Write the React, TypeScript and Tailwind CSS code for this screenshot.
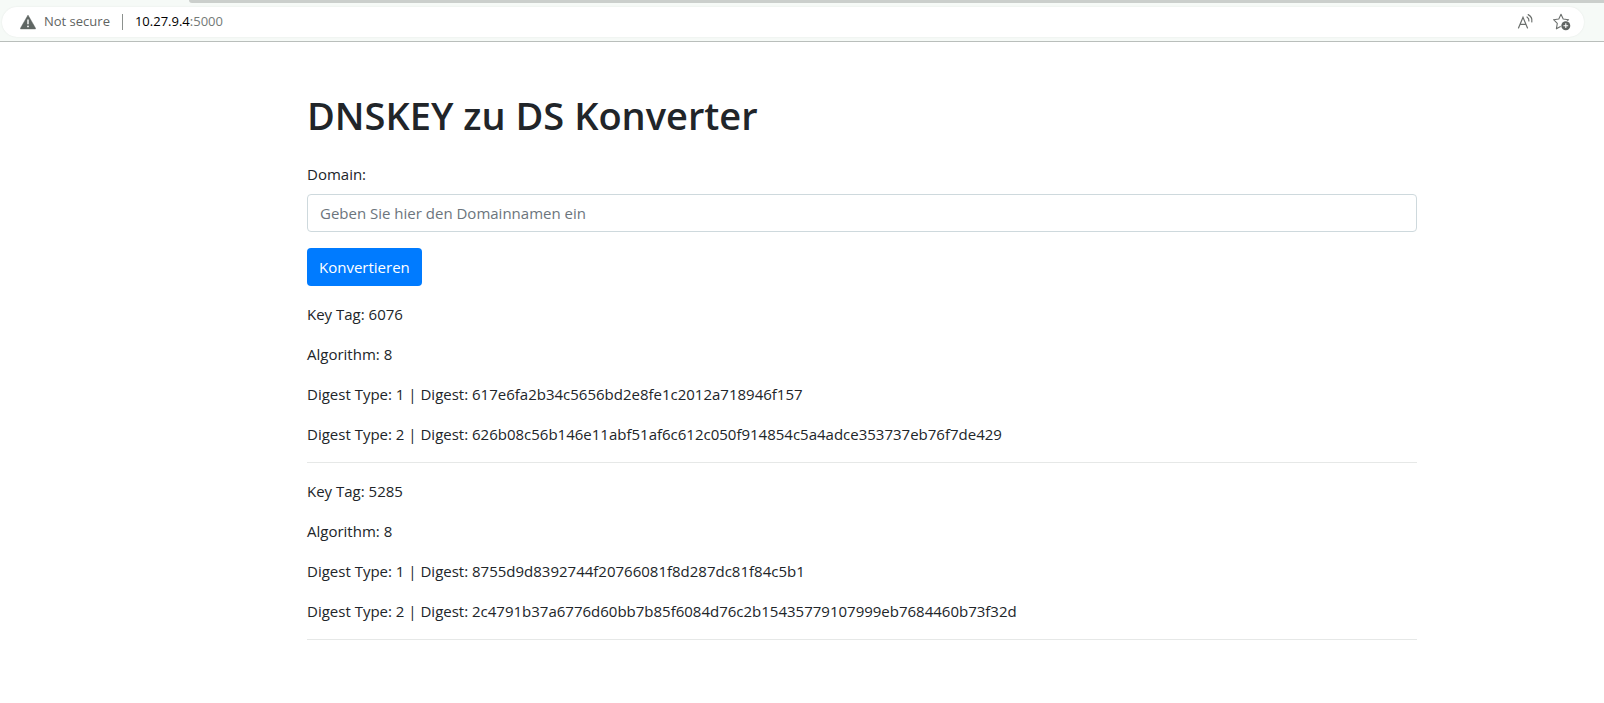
import React from "react";

type Digest = { type: number; value: string };
type KeyRecord = { keyTag: number; algorithm: number; digests: Digest[] };

const records: KeyRecord[] = [
  {
    keyTag: 6076,
    algorithm: 8,
    digests: [
      { type: 1, value: "617e6fa2b34c5656bd2e8fe1c2012a718946f157" },
      { type: 2, value: "626b08c56b146e11abf51af6c612c050f914854c5a4adce353737eb76f7de429" },
    ],
  },
  {
    keyTag: 5285,
    algorithm: 8,
    digests: [
      { type: 1, value: "8755d9d8392744f20766081f8d287dc81f84c5b1" },
      { type: 2, value: "2c4791b37a6776d60bb7b85f6084d76c2b15435779107999eb7684460b73f32d" },
    ],
  },
];

function WarningIcon() {
  return (
    <svg width="16" height="16" viewBox="0 0 16 16" aria-hidden="true">
      <path d="M8 1 15.6 14.2 Q16 15 15.2 15 H0.8 Q0 15 0.4 14.2Z" fill="#5f6663" stroke="#5f6663" strokeWidth="0.4" strokeLinejoin="round" />
      <path d="M8 5.5v4.8" stroke="#fff" strokeWidth="1.4" />
      <circle cx="8" cy="12.4" r="0.9" fill="#fff" />
    </svg>
  );
}

function ReadAloudIcon() {
  return (
    <svg width="18" height="18" viewBox="0 0 18 18" fill="none" stroke="#6b6f6d" strokeWidth="1.2" strokeLinecap="round" aria-hidden="true">
      <path d="M1.5 15 6 4.3 10.5 15M3.1 11.4H8.9" />
      <path d="M10 4Q12.2 5.5 11.9 8M11.2 1.6Q15.6 4 14.8 8.8" />
    </svg>
  );
}

function AddFavoriteIcon() {
  return (
    <svg width="18" height="18" viewBox="0 0 18 18" fill="none" aria-hidden="true">
      <path
        d="M8 1.2 10.2 6 15.6 6.7 11.6 10.4 12.6 15.8 8 13.2 3.4 15.8 4.3 10.4 0.6 6.7 5.8 6Z"
        stroke="#6b6f6d"
        strokeWidth="1.1"
        strokeLinejoin="round"
      />
      <circle cx="12.8" cy="12.7" r="5.2" fill="#fff" />
      <circle cx="12.8" cy="12.7" r="4.5" fill="#5f6361" />
      <path d="M12.8 10.3v4.8M10.4 12.7h4.8" stroke="#fff" strokeWidth="1.1" />
    </svg>
  );
}

function BrowserBar() {
  return (
    <header className="border-b border-[#b9bebb] bg-[#f6faf7]">
      <div className="flex h-[3px]">
        <div className="w-[189px]" />
        <div className="flex-1 rounded-bl-[3px] bg-[#cbcfcc]" />
      </div>
      <div className="pt-1 pr-5 pb-1 pl-[2px]">
        <div className="flex h-[30px] items-center rounded-full bg-white pr-[13px] pl-[18px] text-[13px] shadow-[0_0_2px_rgba(0,0,0,0.08)]">
          <WarningIcon />
          <span className="ml-2 text-[#5f6462]">Not secure</span>
          <span className="mx-3 h-4 w-px bg-[#8c918e]" />
          <span className="flex-1 text-[#747a77]">
            <span className="text-black">10.27.9.4</span>:5000
          </span>
          <button type="button" aria-label="Read aloud" className="mr-[18px]">
            <ReadAloudIcon />
          </button>
          <button type="button" aria-label="Add to favorites">
            <AddFavoriteIcon />
          </button>
        </div>
      </div>
    </header>
  );
}

function KeyResult({ record }: { record: KeyRecord }) {
  return (
    <section className="flex flex-col gap-4 border-b border-[#e6e8e7] pt-4 pb-4">
      <p>Key Tag: {record.keyTag}</p>
      <p>Algorithm: {record.algorithm}</p>
      {record.digests.map((digest) => (
        <p key={digest.type}>
          Digest Type: {digest.type} | Digest: {digest.value}
        </p>
      ))}
    </section>
  );
}

export default function App() {
  return (
    <div className="min-h-screen bg-white font-['Open_Sans','Noto_Sans',sans-serif]">
      <BrowserBar />
      <main className="pt-[49px] pr-[187px] pb-12 pl-[307px] text-[15px] leading-6 text-[#212529]">
        <h1 className="mb-[23px] text-[38px] leading-[48px] font-semibold">DNSKEY zu DS Konverter</h1>
        <form onSubmit={(event) => event.preventDefault()}>
          <label htmlFor="domain" className="mb-2 block">
            Domain:
          </label>
          <input
            id="domain"
            type="text"
            placeholder="Geben Sie hier den Domainnamen ein"
            className="mb-4 block h-[38px] w-full rounded border border-[#ced9dd] px-3 placeholder:text-[#6c757d]"
          />
          <button type="submit" className="block h-[38px] rounded bg-[#007bff] px-3 text-white">
            Konvertieren
          </button>
        </form>
        {records.map((record) => (
          <KeyResult key={record.keyTag} record={record} />
        ))}
      </main>
    </div>
  );
}
